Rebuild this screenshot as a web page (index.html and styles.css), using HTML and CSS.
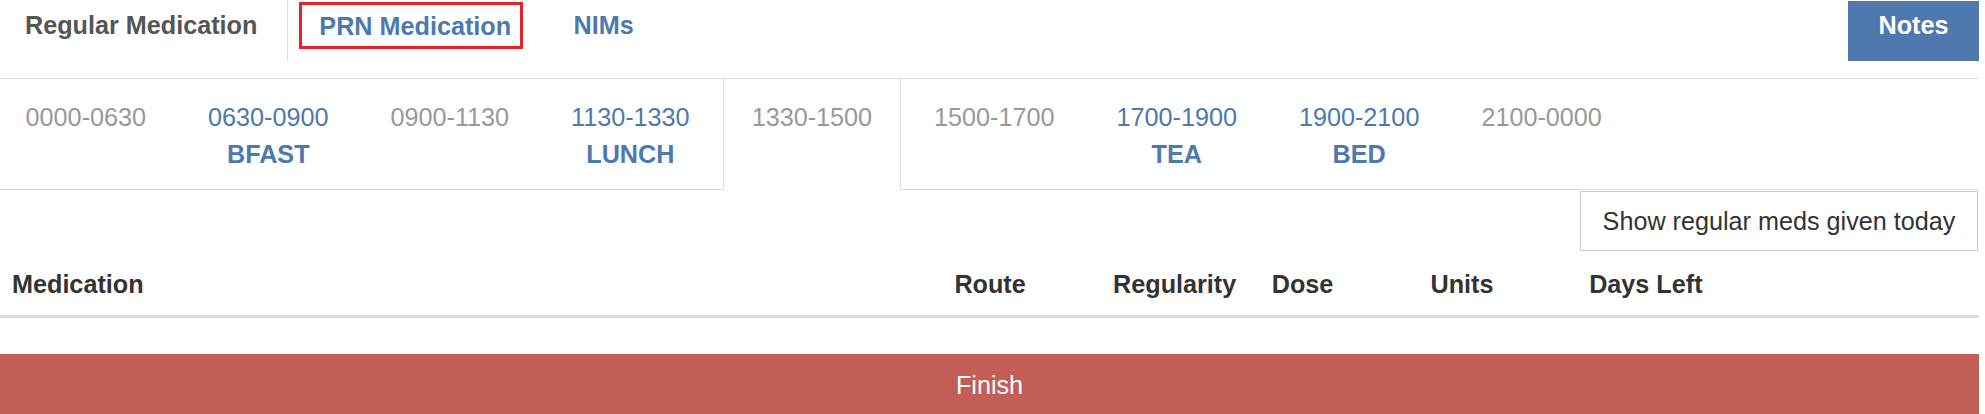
FILE: index.html
```html
<!DOCTYPE html>
<html lang="en">
<head>
<meta charset="utf-8">
<title>Medication</title>
<link rel="stylesheet" href="styles.css">
</head>
<body>
<div class="page">
  <header class="topbar">
    <nav class="tabs">
      <a class="tab tab-current">Regular Medication</a>
      <a class="tab tab-prn">PRN Medication</a>
      <a class="tab tab-nims">NIMs</a>
    </nav>
    <button class="btn-notes">Notes</button>
  </header>

  <ul class="slots">
    <li class="slot"><span class="time">0000-0630</span></li>
    <li class="slot slot-meal"><span class="time">0630-0900</span><span class="meal">BFAST</span></li>
    <li class="slot"><span class="time">0900-1130</span></li>
    <li class="slot slot-meal"><span class="time">1130-1330</span><span class="meal">LUNCH</span></li>
    <li class="slot slot-active"><span class="time">1330-1500</span></li>
    <li class="slot"><span class="time">1500-1700</span></li>
    <li class="slot slot-meal"><span class="time">1700-1900</span><span class="meal">TEA</span></li>
    <li class="slot slot-meal"><span class="time">1900-2100</span><span class="meal">BED</span></li>
    <li class="slot"><span class="time">2100-0000</span></li>
  </ul>

  <div class="tools">
    <button class="btn-show">Show regular meds given today</button>
  </div>

  <div class="meds-head">
    <div class="th th-first">Medication</div>
    <div class="th">Route</div>
    <div class="th">Regularity</div>
    <div class="th">Dose</div>
    <div class="th">Units</div>
    <div class="th">Days Left</div>
    <div class="th"></div>
  </div>

  <button class="btn-finish">Finish</button>
</div>
</body>
</html>
```

FILE: styles.css
```css
html, body {
  margin: 0;
  padding: 0;
  background: #fff;
  overflow: hidden;
}

body {
  font-family: "Liberation Sans", Arial, Helvetica, sans-serif;
  font-size: 25.2px;
  line-height: 36px;
  color: #333;
}

.page {
  width: 1979px;
}

/* ---------- top bar ---------- */
.topbar {
  display: flex;
  align-items: flex-start;
  height: 78.2px;
}

.tabs {
  display: flex;
  align-items: flex-start;
}

.tab {
  display: block;
  font-weight: bold;
  text-decoration: none;
  white-space: nowrap;
}

.tab-current {
  color: #555;
  padding: 7px 30px 18px 25px;
  border-right: 1.5px solid #ddd;
}

.tab-prn {
  color: #4d79af;
  margin: 2px 0 0 11px;
  padding: 2.5px 9px 2.5px 17px;
  border: 3px solid #e5232a;
}

.tab-nims {
  color: #4d79af;
  margin-left: 50.5px;
  padding: 7px 0 18px;
}

.btn-notes {
  margin: 1px 0 0 auto;
  padding: 5.5px 30.5px 18.5px;
  border: 0;
  border-radius: 0;
  background: #4f79ae;
  color: #fff;
  font: bold 25.2px/36px "Liberation Sans", Arial, Helvetica, sans-serif;
}

/* ---------- time slots ---------- */
.slots {
  list-style: none;
  margin: 0;
  padding: 0;
  display: flex;
  border-top: 1.8px solid #ddd;
  border-bottom: 1.8px solid #ddd;
}

.slot {
  display: flex;
  flex-direction: column;
  align-items: center;
  padding: 19.8px 27.6px 18px;
  margin: 0 4.8px -1.8px 0;
  border: 1.8px solid transparent;
  border-top: 0;
  color: #999;
  white-space: nowrap;
}

.slot:first-child {
  margin-left: -3px;
}

.slot-meal {
  color: #4d79af;
}

.meal {
  font-weight: bold;
  margin-top: 1px;
}

.slot-active {
  background: #fff;
  border-left-color: #ddd;
  border-right-color: #ddd;
  border-bottom-color: #fff;
}

/* ---------- tools ---------- */
.tools {
  display: flex;
  justify-content: flex-end;
}

.btn-show {
  margin: 1px 1px 0 0;
  padding: 11px 21.6px;
  border: 1.8px solid #ccc;
  border-radius: 0;
  background: #fff;
  color: #333;
  font: 25.2px/36px "Liberation Sans", Arial, Helvetica, sans-serif;
}

/* ---------- table head ---------- */
.meds-head {
  display: grid;
  grid-template-columns: 940px repeat(5, 158.7px) 1fr;
  border-bottom: 3.6px solid #ddd;
  margin-bottom: 36px;
}

.th {
  padding: 15px 14.4px 13px;
  font-weight: bold;
  color: #333;
  white-space: nowrap;
}

.th-first {
  padding-left: 12px;
}

/* ---------- finish ---------- */
.btn-finish {
  display: block;
  width: 100%;
  padding: 12.6px 0;
  border: 0;
  border-radius: 0;
  background: #c35e57;
  color: #fff;
  font: 25.2px/36px "Liberation Sans", Arial, Helvetica, sans-serif;
  text-align: center;
}
```
